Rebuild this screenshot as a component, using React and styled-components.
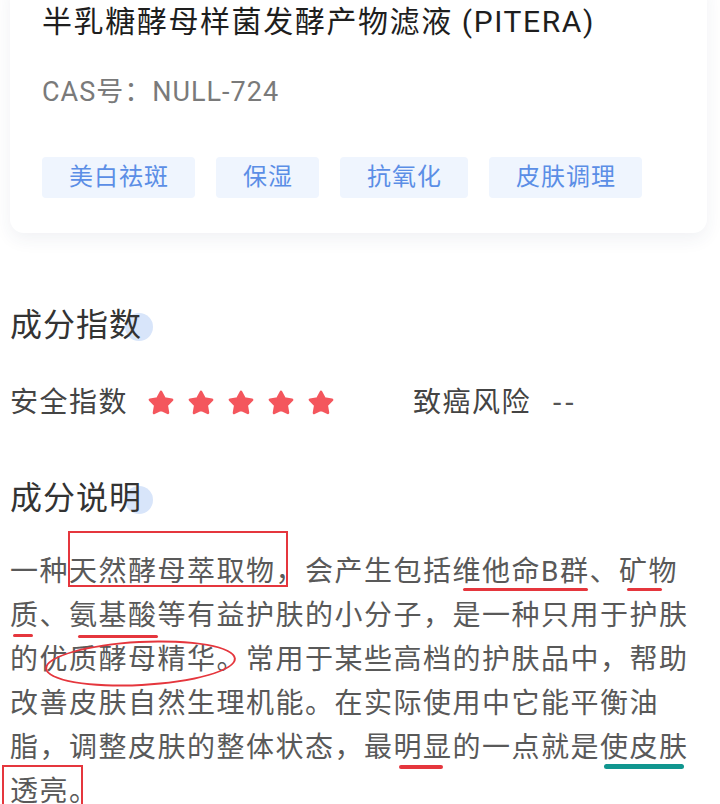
import React from "react";
import styled, { createGlobalStyle } from "styled-components";

const GlobalStyle = createGlobalStyle`
  html, body {
    margin: 0;
    padding: 0;
    background: #ffffff;
  }
  body {
    font-family: Roboto, "Noto Sans CJK SC", sans-serif;
    overflow: hidden;
  }
`;

const Page = styled.div`
  padding: 0 10px;
  display: flex;
  flex-direction: column;
  align-items: flex-start;
`;

const Card = styled.div`
  align-self: stretch;
  margin: -20px 3px 0 0;
  padding: 22px 32px 35px;
  background: #fff;
  border-radius: 14px;
  box-shadow: 0 6px 18px rgba(40, 60, 100, 0.07);
`;

const Name = styled.div`
  font-size: 30px;
  line-height: 40px;
  letter-spacing: 1.6px;
  color: #1e1e1e;
`;

const Cas = styled.div`
  margin-top: 32px;
  font-size: 27px;
  line-height: 36px;
  letter-spacing: 1px;
  color: #7a7a7a;
`;

const Tags = styled.div`
  margin-top: 47px;
  display: flex;
  gap: 21px;
`;

const Tag = styled.span`
  height: 41px;
  line-height: 41px;
  padding: 0 26px 0 27px;
  font-size: 24px;
  letter-spacing: 1px;
  color: #5b8ee6;
  background: #eff5fe;
  border-radius: 4px;
`;

const Heading = styled.h2`
  position: relative;
  z-index: 0;
  display: inline-block;
  margin: ${(p) => p.$top}px 0 0;
  font-size: 32px;
  line-height: 44px;
  font-weight: 400;
  letter-spacing: 1px;
  color: #333;

  &::before {
    content: "";
    position: absolute;
    z-index: -1;
    right: -11px;
    top: 10px;
    width: 28px;
    height: 28px;
    border-radius: 50%;
    background: #d8e5fa;
  }
`;

const StatRow = styled.div`
  margin-top: 36px;
  display: flex;
  align-items: center;
  font-size: 28px;
  line-height: 40px;
  letter-spacing: 1.5px;
  color: #444;
`;

const Stars = styled.div`
  display: flex;
  gap: 12px;
  margin: 0 78px 0 19px;
`;

const Dash = styled.span`
  margin-left: 22px;
  letter-spacing: 4px;
  font-size: 30px;
  color: #555;
`;

const Paragraph = styled.p`
  margin: 30px 0 0;
  width: 688px;
  font-size: 28px;
  line-height: 44px;
  letter-spacing: 1.5px;
  color: #595959;
`;

const Mark = styled.span`
  position: relative;
  display: inline-block;

  &::after {
    content: "";
    position: absolute;
    left: ${(p) => p.$l}px;
    right: ${(p) => p.$r}px;
    top: ${(p) => p.$t}px;
    ${(p) => (p.$b !== undefined ? `bottom: ${p.$b}px;` : `height: ${p.$h || 3}px;`)}
    ${(p) =>
      p.$kind === "box"
        ? "border: 2px solid #e5363d;"
        : p.$kind === "ring"
        ? "border: 2px solid #e5363d; border-radius: 50%; transform: rotate(-3deg);"
        : `background: ${p.$color || "#e5363d"}; border-radius: 3px;`}
    pointer-events: none;
  }
`;

const Star = () => (
  <svg width="28" height="28" viewBox="0 0 24 24">
    <polygon
      points="12,2.6 15,8.3 21.4,9.3 16.8,13.9 17.9,20.4 12,17.5 6.1,20.4 7.2,13.9 2.6,9.3 9,8.3"
      fill="#f4565d"
      stroke="#f4565d"
      strokeWidth="2.4"
      strokeLinejoin="round"
    />
  </svg>
);

const tags = ["美白祛斑", "保湿", "抗氧化", "皮肤调理"];

export default function App() {
  return (
    <>
      <GlobalStyle />
      <Page>
        <Card>
          <Name>半乳糖酵母样菌发酵产物滤液 (PITERA)</Name>
          <Cas>CAS号：NULL-724</Cas>
          <Tags>
            {tags.map((t) => (
              <Tag key={t}>{t}</Tag>
            ))}
          </Tags>
        </Card>

        <Heading $top={70}>成分指数</Heading>
        <StatRow>
          <span>安全指数</span>
          <Stars>
            {[0, 1, 2, 3, 4].map((i) => (
              <Star key={i} />
            ))}
          </Stars>
          <span>致癌风险</span>
          <Dash>--</Dash>
        </StatRow>

        <Heading $top={53}>成分说明</Heading>
        <Paragraph>
          一种
          <Mark $kind="box" $l={-1} $r={17} $t={-19} $b={7}>
            天然酵母萃取物，
          </Mark>
          会产生包括
          <Mark $l={10} $r={2} $t={38} $h={3}>
            维他命B群
          </Mark>
          、
          <Mark $l={8} $r={16} $t={38} $h={3}>
            矿物
          </Mark>
          <Mark $l={3} $r={7} $t={40} $h={3}>
            质
          </Mark>
          、
          <Mark $l={9} $r={0} $t={41} $h={3}>
            氨基酸
          </Mark>
          等有益护肤的小分子，是一种只用于护肤的
          <Mark $kind="ring" $l={5} $r={11} $t={3} $b={-4}>
            优质酵母精华。
          </Mark>
          常用于某些高档的护肤品中，帮助改善皮肤自然生理机能。在实际使用中它能平衡油脂，调整皮肤的整体状态，最
          <Mark $l={5} $r={10} $t={39} $h={4}>
            明显
          </Mark>
          的一点就是
          <Mark $l={4} $r={5} $t={38} $h={5} $color="#11968f">
            使皮肤
          </Mark>
          <Mark $kind="box" $l={-8} $r={16} $t={-5} $b={-12}>
            透亮。
          </Mark>
        </Paragraph>
      </Page>
    </>
  );
}
